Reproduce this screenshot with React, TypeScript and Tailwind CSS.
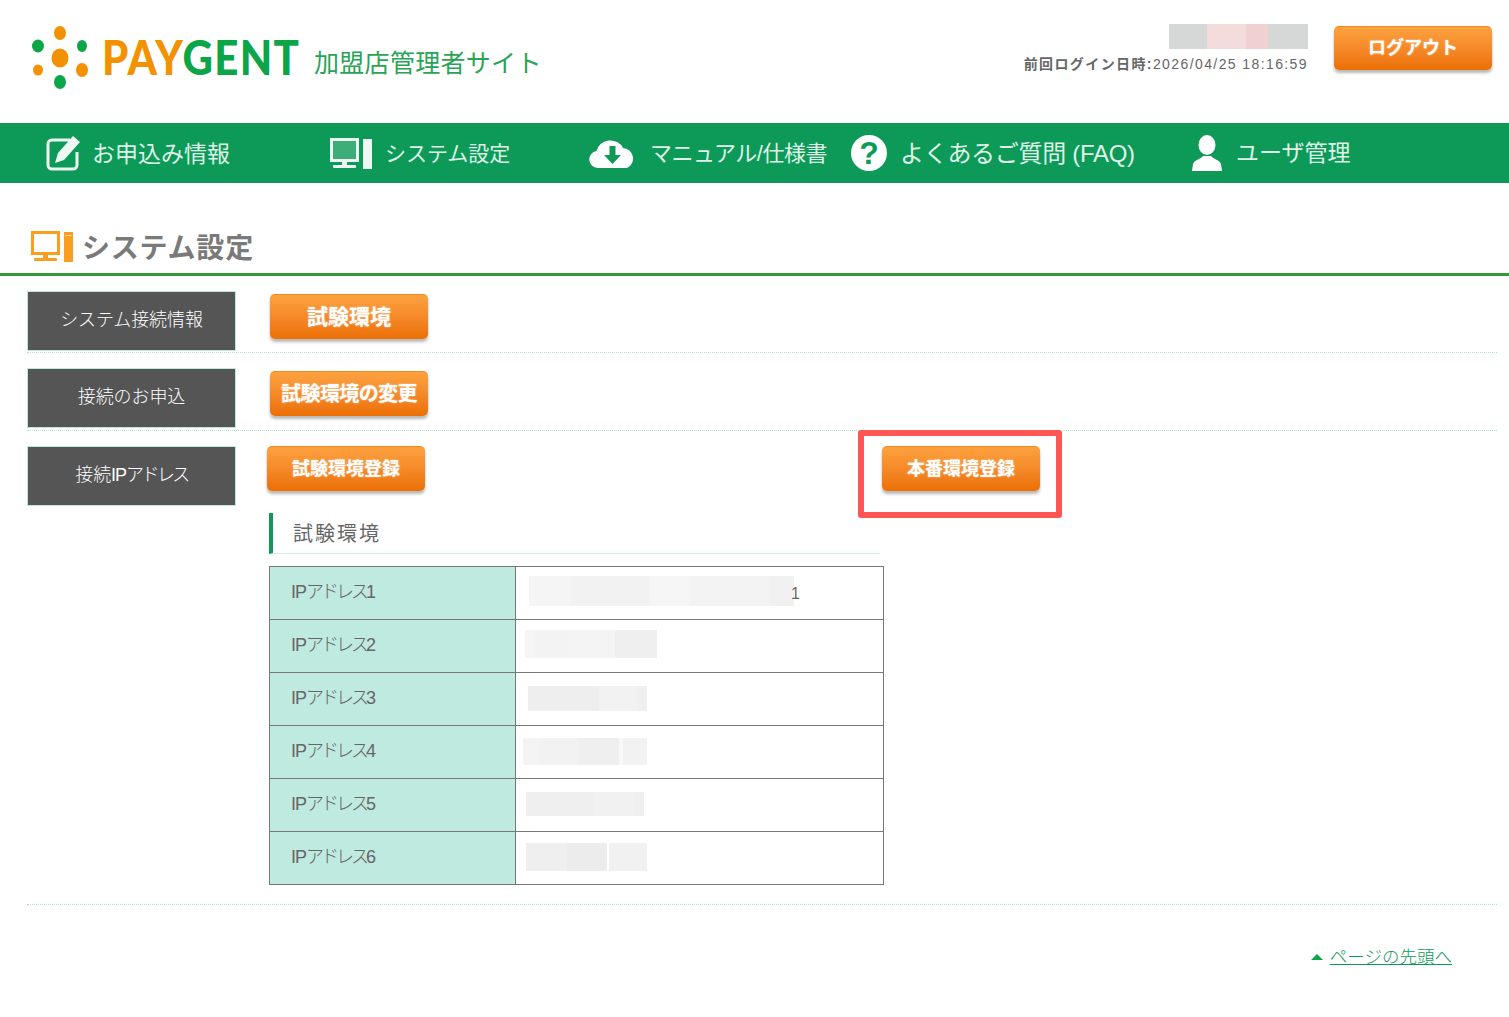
const JP = "font-['Liberation_Sans','Noto_Sans_CJK_JP',sans-serif]";

function Monitor({ color, fill, className }: { color: string; fill: string; className: string }) {
  return (
    <svg viewBox="0 0 42 31" className={className}>
      <rect x="1.5" y="1.5" width="26" height="21" fill={fill} stroke={color} strokeWidth="3" />
      <rect x="12" y="23" width="5" height="4" fill={color} />
      <rect x="3" y="27" width="23" height="3" rx="1" fill={color} />
      <rect x="33" y="1" width="9" height="30" fill={color} />
      <rect x="34.5" y="4" width="6" height="1" fill="white" opacity="0.6" />
    </svg>
  );
}

function OrangeButton({ label, className, textClass }: { label: string; className: string; textClass: string }) {
  return (
    <button
      className={`w-[158px] shrink-0 rounded-[5px] border-t border-[#f08a1c] bg-gradient-to-b from-[#fda23f] to-[#ec6f00] text-white font-bold shadow-[0_3px_3px_rgba(0,0,0,0.28)] [text-shadow:0_0_2px_rgba(255,255,255,0.6)] ${textClass} ${className}`}
    >
      {label}
    </button>
  );
}

function RowLabel({ children }: { children: React.ReactNode }) {
  return (
    <div className="w-[209px] h-[60px] shrink-0 flex items-center justify-center pb-[2px] bg-[#555555] border border-[#bce8db] text-white text-[18px] tracking-[-0.1px] font-light">
      {children}
    </div>
  );
}

const ipRows = [
  {
    name: 'アドレス1',
    ml: 'ml-[13px]',
    h: 'h-[30px]',
    pb: 'pb-[4px]',
    tail: true,
    blocks: [[42, '#f5f5f5'], [79, '#f2f2f2'], [40, '#f6f6f6'], [80, '#f3f3f3'], [24, '#f1f1f1']],
  },
  {
    name: 'アドレス2',
    ml: 'ml-[9px]',
    h: 'h-[28px]',
    pb: 'pb-[4px]',
    tail: false,
    blocks: [[10, '#f5f5f5'], [40, '#f3f3f3'], [40, '#f4f4f4'], [42, '#efefef']],
  },
  {
    name: 'アドレス3',
    ml: 'ml-[12px]',
    h: 'h-[25px]',
    pb: 'pb-[2px]',
    tail: false,
    blocks: [[71, '#eeeeee'], [38, '#f2f2f2'], [10, '#efefef']],
  },
  {
    name: 'アドレス4',
    ml: 'ml-[7px]',
    h: 'h-[27px]',
    pb: 'pb-[1px]',
    tail: false,
    blocks: [[16, '#f4f4f4'], [40, '#f2f2f2'], [40, '#efefef'], [4, '#f8f8f8'], [24, '#f2f2f2']],
  },
  {
    name: 'アドレス5',
    ml: 'ml-[10px]',
    h: 'h-[24px]',
    pb: 'pb-[2px]',
    tail: false,
    blocks: [[67, '#efefef'], [41, '#f1f1f1'], [10, '#efefef']],
  },
  {
    name: 'アドレス6',
    ml: 'ml-[10px]',
    h: 'h-[28px]',
    pb: 'pb-[2px]',
    tail: false,
    blocks: [[41, '#efefef'], [40, '#ececec'], [2, '#ffffff'], [38, '#f1f1f1']],
  },
] as { name: string; ml: string; h: string; pb: string; tail: boolean; blocks: [number, string][] }[];

export default function App() {
  return (
    <div className={`relative min-h-[1017px] bg-white ${JP}`}>
      {/* header */}
      <header className="h-[123px] flex justify-between">
        <div className="flex items-start pl-[32px] pt-[26px]">
          <svg viewBox="0 0 56 63" className="w-[56px] h-[63px]">
            <ellipse cx="28" cy="7" rx="6" ry="7" fill="#f39200" />
            <ellipse cx="6" cy="20" rx="6" ry="6.5" fill="#0ca548" />
            <ellipse cx="50" cy="20" rx="5" ry="6" fill="#0ca548" />
            <ellipse cx="28" cy="32" rx="8.5" ry="9.5" fill="#f39200" />
            <ellipse cx="6" cy="44" rx="5" ry="5.5" fill="#f39200" />
            <ellipse cx="50" cy="44" rx="6" ry="7" fill="#f39200" />
            <ellipse cx="28" cy="56" rx="6" ry="7" fill="#0ca548" />
          </svg>
          <div className="ml-[14px] mt-[4px] flex items-start">
            <span className="mt-[1px] inline-block w-[197px] origin-left scale-x-[0.895] font-['Lato',sans-serif] font-black text-[47px] leading-[52px] tracking-[1.5px] whitespace-nowrap">
              <span className="text-[#f39200]">PAY</span>
              <span className="text-[#0ca548]">GENT</span>
            </span>
            <span className="ml-[15px] mt-[18px] text-[25px] leading-[30px] tracking-[0.3px] text-[#29a455]">加盟店管理者サイト</span>
          </div>
        </div>
        <div className="flex items-start pr-[17px]">
          <div className="flex flex-col items-end pt-[24px]">
            <div className="flex h-[25px] pr-px">
              <div className="w-[38px] bg-[#d6d8d7]" />
              <div className="w-[39px] bg-[#f4dcdd]" />
              <div className="w-[22px] bg-[#f1d0d2]" />
              <div className="w-[40px] bg-[#d6d8d7]" />
            </div>
            <div className="mt-[6px] pr-px text-[14px] leading-[18px] text-[#666666] font-bold tracking-[1.4px] whitespace-nowrap">
              前回ログイン日時:<span className="font-normal">2026/04/25 18:16:59</span>
            </div>
          </div>
          <OrangeButton label="ログアウト" className="ml-[25px] mt-[26px] h-[44px]" textClass="text-[18px]" />
        </div>
      </header>

      {/* global nav */}
      <nav className="h-[60px] bg-[#0d9a58] flex items-center text-[#dff2e8] text-[23px] whitespace-nowrap">
        <div className="ml-[46px] flex items-center w-[284px]">
          <svg viewBox="0 0 34 35" className="w-[34px] h-[35px]">
            <path
              d="M24 4H6a4 4 0 0 0-4 4v21a4 4 0 0 0 4 4h21a4 4 0 0 0 4-4V16"
              fill="none"
              stroke="#eef8f2"
              strokeWidth="3"
            />
            <path d="M27 0l7 6-16 18-9 3 3-10z" fill="#eef8f2" />
          </svg>
          <span className="ml-[12px] leading-[32px] pt-[1px]">お申込み情報</span>
        </div>
        <div className="flex items-center w-[259px]">
          <Monitor color="#eef8f2" fill="#3dae7a" className="w-[42px] h-[31px]" />
          <span className="ml-[13px] text-[21px] pt-[1px]">システム設定</span>
        </div>
        <div className="flex items-center w-[262px]">
          <svg viewBox="0 0 48 30" className="w-[48px] h-[30px]">
            <path d="M9 30a8.5 8.5 0 0 1-1.5-16.9A14 13 0 0 1 34 10a10.5 10.5 0 0 1 4 20z" fill="white" />
            <path d="M20.5 8h6v9h5.5l-8.5 9-8.5-9h5.5z" fill="#0d9a58" />
          </svg>
          <span className="ml-[13px] text-[22px] tracking-[-0.5px] pt-[1px]">マニュアル/仕様書</span>
        </div>
        <div className="flex items-center w-[341px]">
          <div className="w-[36px] h-[36px] rounded-full bg-white flex items-center justify-center text-[#0d9a58] text-[32px] font-bold leading-none">
            ?
          </div>
          <span className="ml-[13px] text-[24px] tracking-[-0.3px] pt-[1px]">よくあるご質問 (FAQ)</span>
        </div>
        <div className="flex items-center">
          <svg viewBox="0 0 30 36" className="w-[30px] h-[36px]">
            <ellipse cx="15" cy="10" rx="8.5" ry="10" fill="white" />
            <path d="M11 21h8c2 3 9 4 10 8l1 7H0l1-7c1-4 8-5 10-8z" fill="white" />
          </svg>
          <span className="ml-[14px] text-[23px] pt-[1px]">ユーザ管理</span>
        </div>
      </nav>

      {/* page title */}
      <div className="h-[93px] border-b-[3px] border-[#359a3a] pl-[31px] pt-[48px] flex items-start">
        <Monitor color="#fb9d1e" fill="white" className="w-[42px] h-[31px]" />
        <h1 className="ml-[9px] mt-[2px] text-[28px] leading-[32px] tracking-[0.8px] font-bold text-[#7a7a7a]">システム設定</h1>
      </div>

      <div className="pl-[27px] pr-[12px]">
        <div className="mt-[15px] flex border-b border-dotted border-[#a9e6d2] pb-px">
          <RowLabel>システム接続情報</RowLabel>
          <OrangeButton label="試験環境" className="ml-[34px] mt-[3px] h-[45px]" textClass="text-[21px]" />
        </div>

        <div className="mt-[15px] flex border-b border-dotted border-[#a9e6d2] pb-[2px]">
          <RowLabel>接続のお申込</RowLabel>
          <OrangeButton label="試験環境の変更" className="ml-[34px] mt-[3px] h-[45px]" textClass="text-[20px] tracking-[-0.6px]" />
        </div>

        <div className="mt-[15px] flex border-b border-dotted border-[#a9e6d2] pb-[19px]">
          <RowLabel>
            接続<span className="tracking-[-1px]">IP</span>
            <span className="tracking-[-2.6px]">アドレス</span>
          </RowLabel>
          <div className="flex flex-col">
            <div className="flex">
              <OrangeButton label="試験環境登録" className="ml-[31px] h-[45px]" textClass="text-[18px]" />
              <OrangeButton label="本番環境登録" className="ml-[457px] h-[45px]" textClass="text-[18px]" />
            </div>
            <h2 className="ml-[33px] mt-[22px] w-[611px] h-[41px] border-l-[4px] border-b border-l-[#0d9a58] border-b-[#d2efe8] pl-[20px] text-[20px] leading-[42px] tracking-[2px] text-[#666666]">
              試験環境
            </h2>
            <table className="ml-[33px] mt-[12px] w-[615px] border-collapse text-[18px] text-[#666666]">
              <tbody>
                {ipRows.map((row) => (
                  <tr key={row.name} className="h-[53px]">
                    <th className="w-[246px] border border-[#777777] bg-[#bfeae0] pl-[21px] pb-[2px] text-left font-light">
                      <span className="tracking-[-1px]">IP</span>
                      <span className="tracking-[-3px]">{row.name}</span>
                    </th>
                    <td className="border border-[#777777] p-0">
                      <div className={`flex items-center ${row.pb}`}>
                        <div className={`flex ${row.ml} ${row.h}`}>
                          {row.blocks.map(([width, color], i) => (
                            <div key={i} style={{ width, backgroundColor: color }} />
                          ))}
                        </div>
                        {row.tail && <span className="-ml-[3px] mt-[6px] text-[16px] leading-none font-light">1</span>}
                      </div>
                    </td>
                  </tr>
                ))}
              </tbody>
            </table>
          </div>
        </div>

        <div className="mt-[40px] flex items-center justify-end pr-[45px]">
          <span className="mr-[7px] w-0 h-0 border-x-[6px] border-x-transparent border-b-[6px] border-b-[#0ca548]" />
          <a href="#top" className="text-[17.5px] leading-[24px] text-[#0d9a58] underline font-light">
            ページの先頭へ
          </a>
        </div>
      </div>

      {/* red callout drawn over the page */}
      <div className="absolute left-[858px] top-[430px] w-[204px] h-[88px] border-[6px] border-[#ff5555] rounded-[3px]" />
    </div>
  );
}
